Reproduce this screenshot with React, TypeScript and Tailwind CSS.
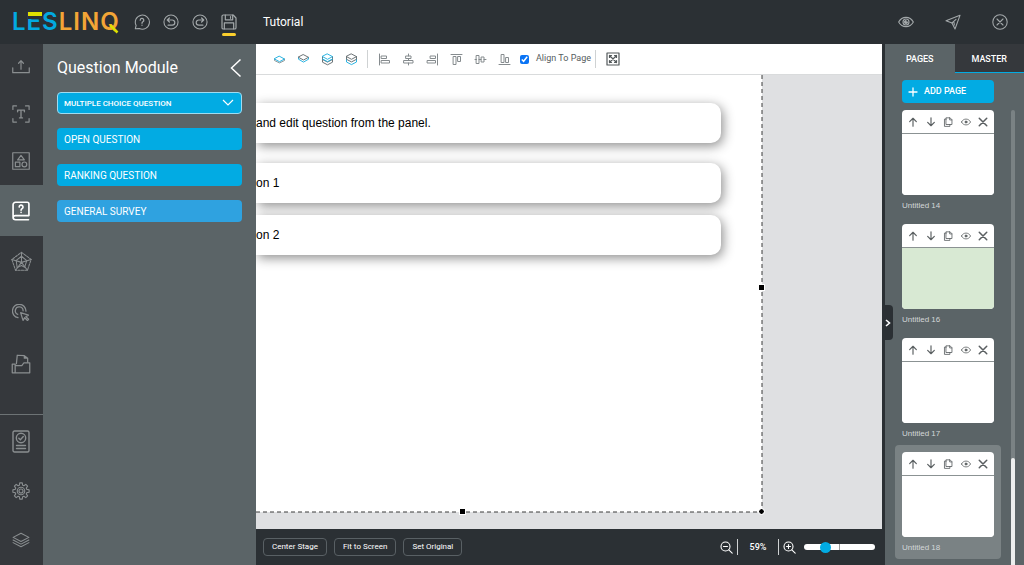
import React, { useState } from 'react';

interface PageItem {
  id: number;
  name: string;
  green?: boolean;
}

interface IconProps {
  size?: number;
  box?: number;
  sw?: number;
  className?: string;
  children: React.ReactNode;
}

// =========================
// ICONS
// =========================
function Svg({ size = 16, box = 24, sw = 1.6, className, children }: IconProps) {
  return (
    <svg
      width={size}
      height={size}
      viewBox={`0 0 ${box} ${box}`}
      fill="none"
      stroke="currentColor"
      strokeWidth={sw}
      strokeLinecap="round"
      strokeLinejoin="round"
      className={className}
      aria-hidden="true"
    >
      {children}
    </svg>
  );
}

const HelpIcon = () => (
  <Svg size={16}>
    <path d="M2 22l1.2-4.8A10.6 10.6 0 1 1 8 21.8z" />
    <path d="M9.3 9.3a2.7 2.7 0 1 1 4 2.4c-.9.5-1.3 1-1.3 2.2M12 16.6v.3" strokeWidth="1.9" />
  </Svg>
);

const UndoIcon = () => (
  <Svg size={16}>
    <circle cx="12" cy="12" r="10.6" />
    <path d="M9.6 6L6.4 9l3.2 3M6.6 9h7.2a3.9 3.9 0 0 1 0 7.8H7.6" strokeWidth="1.8" />
  </Svg>
);

const RedoIcon = () => (
  <Svg size={16}>
    <circle cx="12" cy="12" r="10.6" />
    <path d="M14.4 6l3.2 3-3.2 3M17.4 9h-7.2a3.9 3.9 0 0 0 0 7.8h6.2" strokeWidth="1.8" />
  </Svg>
);

const SaveIcon = () => (
  <Svg size={16} sw={1.8}>
    <path d="M3.5 1.5h14.8L22.5 6v14.5a2 2 0 0 1-2 2h-17a2 2 0 0 1-2-2v-17a2 2 0 0 1 2-2z" />
    <path d="M6.5 1.8v7h11v-7M14.3 4v2.5M5 22.2v-9h14v9" />
  </Svg>
);

const EyeIcon = () => (
  <Svg size={16} sw={1.7}>
    <path d="M1 12c2.4-4.4 6.4-7 11-7s8.6 2.6 11 7c-2.4 4.4-6.4 7-11 7s-8.6-2.6-11-7z" />
    <circle cx="12" cy="12" r="4.5" />
    <path d="M12 9.8a2.2 2.2 0 1 0 2.2 2.2H12z" fill="currentColor" />
  </Svg>
);

const SendIcon = () => (
  <Svg size={16}>
    <path d="M22.5 2L1.5 10.2l9 3.3L15 22.5z" />
    <path d="M10.5 13.5L16.5 8M13.5 12.5l.5 4" />
  </Svg>
);

const CloseIcon = () => (
  <Svg size={16}>
    <circle cx="12" cy="12" r="10.8" />
    <path d="M7.5 7.5l9 9M16.5 7.5l-9 9" />
  </Svg>
);

const UploadIcon = () => (
  <Svg size={18}>
    <path d="M1 13v6.5h22V13M12 15V4M8.8 7L12 3.6 15.2 7" />
  </Svg>
);

const TextIcon = () => (
  <Svg size={18}>
    <path d="M1.2 6V1.2H6M18 1.2h4.8V6M22.8 18v4.8H18M6 22.8H1.2V18" />
    <path d="M7.5 9V6.8h9V9M12 6.8v10.4M10 17.2h4" strokeWidth="1.8" />
  </Svg>
);

const ShapesIcon = () => (
  <Svg size={18}>
    <path d="M1 1h22v22H1zM12 4.5l4.5 6h-9zM4.5 13.5h6v6h-6z" />
    <circle cx="16.5" cy="16.5" r="3.2" />
  </Svg>
);

const QuestionBookIcon = () => (
  <Svg size={20} sw={2}>
    <path d="M21.5 17.5V3.5a2 2 0 0 0-2-2H5.5a3 3 0 0 0-3 3v15a3 3 0 0 0 3 3h15.5M2.5 20a2.7 2.7 0 0 1 2.9-2.5h16.1" />
    <path d="M9.8 7.2a2.3 2.3 0 1 1 3.4 2c-.8.5-1.1.9-1.1 1.9M12.1 13.7v.1" />
  </Svg>
);

const RadarIcon = () => (
  <Svg size={21} sw={1.2}>
    <path d="M12 1.5L23 9.7 18.8 22H5.2L1 9.7z" strokeDasharray="2.5 1.4" />
    <path d="M12 6l6 5-2.4 7.5-3.6-2-5 2.5L6 10.8z" />
    <path d="M12 1.5V13M23 9.7L12 13M18.8 22L12 13M5.2 22L12 13M1 9.7L12 13" />
  </Svg>
);

const ClickIcon = () => (
  <Svg size={18} sw={1.7}>
    <path d="M8 18.2A9 9 0 1 1 18.6 9.5" />
    <path d="M7.7 13.8A5.2 5.2 0 1 1 14.8 9" />
    <path d="M11.5 11.5l3.2 10.3 2.3-3.5 3.6 3.6 1.5-1.5-3.6-3.6 3.4-2z" />
  </Svg>
);

const FolderIcon = () => (
  <Svg size={20} sw={1.5}>
    <path d="M6.5 11.5L7.5 1.5 16 2l4 3v5M16 2v3h4" />
    <path d="M1.5 22.5V12H5v10.5zM5 22.5h17.5V10.5h-7L13 14H5" />
  </Svg>
);

const ReportIcon = () => (
  <svg width="18" height="23" viewBox="0 0 18 23" fill="none" stroke="currentColor" strokeWidth="1.4" strokeLinecap="round" aria-hidden="true">
    <rect x="1" y="1" width="16" height="21" rx="1.5" />
    <circle cx="9" cy="8" r="4.7" />
    <path d="M6.8 8.2l1.6 1.5 2.9-3.2M4.5 15.5h9M4.5 18.5h9" />
  </svg>
);

const GearIcon = () => (
  <Svg size={18} sw={1.5}>
    <path d="M9.8 4.3L10.3 1.2h3.4l.5 3.1 1.7.7 2.5-1.8 2.4 2.4L19 8.1l.7 1.7 3.1.5v3.4l-3.1.5-.7 1.7 1.8 2.5-2.4 2.4-2.5-1.8-1.7.7-.5 3.1h-3.4l-.5-3.1-1.7-.7-2.5 1.8-2.4-2.4L5 15.9l-.7-1.7-3.1-.5v-3.4l3.1-.5L5 8.1 3.2 5.6l2.4-2.4L8.1 5z" />
    <circle cx="12" cy="12" r="5" />
    <circle cx="12" cy="12" r="2.7" />
  </Svg>
);

const LayersIcon = () => (
  <Svg size={18} sw={1.5}>
    <path d="M12 3l10.5 5.5L12 14 1.5 8.5zM1.5 12L12 17.5 22.5 12M1.5 15.5L12 21l10.5-5.5" />
  </Svg>
);

// stack order icons, blue marks the moved layer
const OrderIcon = ({ kind }: { kind: number }) => (
  <svg width="13" height="13" viewBox="0 0 13 13" fill="none" strokeWidth="1" strokeLinejoin="round" strokeLinecap="round" aria-hidden="true">
    {kind === 0 && (
      <>
        <path d="M1.500 6v1.500l5 2.400 5-2.400V6" stroke="#8b9699" />
        <path d="M6.500 3.300l5 2.700-5 2.700-5-2.700z" stroke="#2cb4e2" />
      </>
    )}
    {kind === 1 && (
      <>
        <path d="M1.500 4.500v1.700l5 2.900 5-2.900V4.500" stroke="#2cb4e2" />
        <path d="M6.500 1.700l5 2.600-5 2.700-5-2.700z" stroke="#6d7477" />
      </>
    )}
    {kind === 2 && (
      <>
        <path d="M1.500 3.600v5.600l5 2.600 5-2.600V3.600M1.500 6.500l5 2.600 5-2.600" stroke="#6d7477" />
        <path d="M6.500 1l5 2.600-5 2.700-5-2.700zM1.500 6l5 2.600 5-2.600" stroke="#2cb4e2" />
      </>
    )}
    {kind === 3 && (
      <>
        <path d="M1.500 3.600v5.400l5 2.600 5-2.600V3.600" stroke="#2cb4e2" />
        <path d="M6.500 1l5 2.600-5 2.700-5-2.700zM1.500 3.600v2.700l5 2.600 5-2.600V3.600" stroke="#6d7477" />
      </>
    )}
  </svg>
);

const alignPaths = [
  'M1.5 1v11M3.5 3h5v2.5h-5zM3.5 7.5h8V10h-8z',
  'M6.5 1v2M6.5 5.5v2M6.5 10v2M4 3h5v2.5H4zM2 7.5h9V10H2z',
  'M11.5 1v11M4.5 3h5v2.5h-5zM1.5 7.5h8V10h-8z',
  'M1 1.5h11M3.5 3.5H6v8H3.5zM8 3.5h2.5v5H8z',
  'M1 6.5h1.5M5 6.5h2M10 6.5h2M2.5 2.5H5v8H2.5zM7.5 4H10v5H7.5z',
  'M1 11.5h11M3.5 1.5H6v8H3.5zM8 4.5h2.5v5H8z',
];
const alignNames = ['left', 'center', 'right', 'top', 'middle', 'bottom'];

const ZoomIcon = ({ plus }: { plus?: boolean }) => (
  <Svg size={13} box={13} sw={1.1}>
    <circle cx="5.5" cy="5.5" r="4.5" />
    <path d="M8.8 8.8l3.4 3.4M3.5 5.5h4" />
    {plus && <path d="M5.5 3.5v4" />}
  </Svg>
);

// =========================
// DATA
// =========================
const tools = [
  { label: 'Upload', icon: <UploadIcon /> },
  { label: 'Text', icon: <TextIcon /> },
  { label: 'Shapes', icon: <ShapesIcon /> },
];

const modules = [
  { label: 'Radar', icon: <RadarIcon /> },
  { label: 'Interaction', icon: <ClickIcon /> },
  { label: 'Files', icon: <FolderIcon /> },
];

const bottomTools = [
  { label: 'Report', icon: <ReportIcon /> },
  { label: 'Settings', icon: <GearIcon /> },
  { label: 'Layers', icon: <LayersIcon /> },
];

const pages: PageItem[] = [
  { id: 14, name: 'Untitled 14' },
  { id: 16, name: 'Untitled 16', green: true },
  { id: 17, name: 'Untitled 17' },
  { id: 18, name: 'Untitled 18' },
];

const railButton = 'flex w-full items-center justify-center pr-px';
const answerCard = 'flex h-10 items-center rounded-r-[10px] bg-white shadow-[2px_3px_12px_rgba(0,0,0,0.45)]';
const stageButton = 'h-[18px] rounded border border-[#596064] px-2 text-[8px] leading-none text-white';

function PageCard({ page, active, onSelect }: { page: PageItem; active: boolean; onSelect: () => void }) {
  return (
    <li className={`rounded p-[7px] pb-0 ${active ? 'bg-[#7a8284]' : ''}`} onClick={onSelect}>
      <div className="flex h-[85px] flex-col overflow-hidden rounded bg-white">
        <div className="flex h-6 shrink-0 items-center justify-between border-b border-[#8b9293] px-[6px] text-[#5a5f61]">
          <button aria-label="Move up">
            <Svg size={10} sw={2.8}><path d="M12 22V3M4 11l8-8 8 8" /></Svg>
          </button>
          <button aria-label="Move down">
            <Svg size={10} sw={2.8}><path d="M12 2v19M4 13l8 8 8-8" /></Svg>
          </button>
          <button aria-label="Duplicate">
            <Svg size={10} sw={2}>
              <path d="M8 2h9L21.5 6.5V18H8zM16 2v5h5M8 5H3.5v17.5h13V18" />
            </Svg>
          </button>
          <button aria-label="Preview">
            <Svg size={10} sw={1.9}>
              <path d="M1 12c2.4-4.4 6.4-7 11-7s8.6 2.6 11 7c-2.4 4.4-6.4 7-11 7s-8.6-2.600-11-7z" />
              <circle cx="12" cy="12" r="2.5" fill="currentColor" />
            </Svg>
          </button>
          <button aria-label="Delete">
            <Svg size={10} sw={3.6}><path d="M3 3l18 18M21 3L3 21" /></Svg>
          </button>
        </div>
        <div className={`flex-1 ${page.green ? 'bg-[#d8e9d3]' : 'bg-white'}`} />
      </div>
      <p className="h-[22px] font-['Liberation_Sans',sans-serif] text-[8px] leading-[21px] text-[#d3d7d8]">{page.name}</p>
    </li>
  );
}

export default function App() {
  const [activePage, setActivePage] = useState(18);
  const [zoom, setZoom] = useState(26);
  const [alignToPage, setAlignToPage] = useState(true);

  return (
    <div className="flex h-screen flex-col overflow-hidden bg-[#2b3034] font-['Roboto',sans-serif] text-white">

      {/* HEADER */}
      <header className="flex h-11 shrink-0 items-center pb-px pl-3 pr-4 text-[#a3a8aa]">
        <a href="#" className="flex w-[122px] gap-px font-['Inter',sans-serif] text-[24px] font-semibold leading-6 text-[#02a9e0]">
          <span>L</span>
          <span className="relative">
            E
            <span className="absolute left-px top-[2px] h-[7px] w-[14px] border-b-[3px] border-[#2b3034] bg-[#e0e000]" />
          </span>
          <span>S</span>
          <span className="text-[#f3a536]">L</span>
          <span className="text-[#f3a536]">I</span>
          <span className="text-[#f3a536]">N</span>
          <span className="relative text-[#f3a536]">
            Q
            <svg className="absolute bottom-0 right-0" width="10" height="10" viewBox="0 0 10 10" aria-hidden="true">
              <path d="M1 1l7.500 7.500" stroke="#dce000" strokeWidth="2.500" />
            </svg>
          </span>
        </a>
        <div className="flex items-center gap-[13px]">
          <button aria-label="Help"><HelpIcon /></button>
          <button aria-label="Undo"><UndoIcon /></button>
          <button aria-label="Redo"><RedoIcon /></button>
          <button aria-label="Save" className="relative">
            <SaveIcon />
            <span className="absolute -bottom-[6px] left-px h-[3px] w-[14px] rounded-sm bg-[#fbcf2d]" />
          </button>
        </div>
        <h1 className="ml-[26px] text-[12px] text-white">Tutorial</h1>
        <div className="ml-auto flex items-center gap-[31px]">
          <button aria-label="Preview"><EyeIcon /></button>
          <button aria-label="Publish"><SendIcon /></button>
          <button aria-label="Close"><CloseIcon /></button>
        </div>
      </header>

      <div className="flex min-h-0 flex-1">

        {/* TOOL RAIL */}
        <nav className="flex w-[43px] shrink-0 flex-col justify-between bg-[#35383c] text-[#8a8e90]">
          <div>
            {tools.map(t => (
              <button key={t.label} aria-label={t.label} className={`${railButton} h-[47px] pb-[2px]`}>
                {t.icon}
              </button>
            ))}
            <button aria-label="Questions" className={`${railButton} h-[51px] bg-[#5b6467] text-white`}>
              <QuestionBookIcon />
            </button>
            {modules.map(t => (
              <button key={t.label} aria-label={t.label} className={`${railButton} h-[51px]`}>
                {t.icon}
              </button>
            ))}
          </div>
          <div className="border-t border-[#6d7375] pb-px pt-[2px]">
            {bottomTools.map(t => (
              <button key={t.label} aria-label={t.label} className={`${railButton} h-[49px]`}>
                {t.icon}
              </button>
            ))}
          </div>
        </nav>

        {/* QUESTION PANEL */}
        <aside className="w-[213px] shrink-0 bg-[#5b6467] px-[14px]">
          <div className="flex h-12 items-center justify-between">
            <h2 className="text-base">Question Module</h2>
            <button aria-label="Close panel">
              <svg width="12" height="20" viewBox="0 0 12 20" fill="none" stroke="white" strokeWidth="1.5" aria-hidden="true">
                <path d="M10.500 1.500L1.500 10l9 8.500" />
              </svg>
            </button>
          </div>
          <div className="flex flex-col gap-[14px] text-[10px]">
            <div className="relative">
              <select
                aria-label="Question type"
                className="block h-[22px] w-full appearance-none rounded-sm border border-[#9fdcf1] bg-[#02abe3] px-[6px] pt-px text-[8px] font-medium text-white"
              >
                <option>MULTIPLE CHOICE QUESTION</option>
              </select>
              <svg className="pointer-events-none absolute right-2 top-[7px]" width="12" height="8" viewBox="0 0 12 8" fill="none" stroke="white" strokeWidth="1.2" aria-hidden="true">
                <path d="M1 1l5 5 5-5" />
              </svg>
            </div>
            <button className="h-[22px] rounded-sm bg-[#02abe3] px-[7px] text-left">OPEN QUESTION</button>
            <button className="h-[22px] rounded-sm bg-[#02abe3] px-[7px] text-left">RANKING QUESTION</button>
            <button className="h-[22px] rounded-sm bg-[#2fa2e0] px-[7px] text-left">GENERAL SURVEY</button>
          </div>
        </aside>

        {/* STAGE */}
        <main className="flex min-w-0 flex-1 flex-col">
          <div className="flex h-[31px] shrink-0 items-center border-b border-[#d9dbdc] bg-white pl-[11px] text-[#858b8e]">
            {[0, 1, 2, 3].map(k => (
              <button key={k} aria-label={`Order ${k + 1}`} className="flex w-6 justify-center">
                <OrderIcon kind={k} />
              </button>
            ))}
            <span className="mx-1 h-[18px] w-px bg-[#cfd2d3]" />
            {alignPaths.map((d, i) => (
              <button key={d} aria-label={`Align ${alignNames[i]}`} className="flex w-6 justify-center">
                <Svg size={13} box={13} sw={1}><path d={d} /></Svg>
              </button>
            ))}
            <label className="ml-1 flex items-center gap-[7px] text-[9px] text-[#565d60]">
              <input
                type="checkbox"
                className="size-[9px] accent-[#0b74f5]"
                checked={alignToPage}
                onChange={(e) => setAlignToPage(e.target.checked)}
              />
              Align To Page
            </label>
            <span className="ml-1 mr-[10px] h-[18px] w-px bg-[#cfd2d3]" />
            <button aria-label="Full screen">
              <Svg size={14} box={14} sw={1.2} className="text-[#53595b]">
                <path d="M1 1h12v12H1zM3.5 5.5v-2h2M8.5 3.5h2v2M10.5 8.5v2h-2M5.5 10.5h-2v-2M3.5 3.5l7 7M10.5 3.5l-7 7" />
              </Svg>
            </button>
          </div>

          <div className="flex min-h-0 flex-1 overflow-hidden bg-[#dfe0e2]">
            <div className="relative mb-[17px] mr-[120px] flex-1 bg-white">
              <div className="h-full overflow-hidden pr-[41px] pt-7 font-['Liberation_Sans',sans-serif] text-[12px] text-black">
                <div className={answerCard}>and edit question from the panel.</div>
                <div className={`${answerCard} mt-5`}>on 1</div>
                <div className={`${answerCard} mt-3`}>on 2</div>
              </div>
              {/* selection outline */}
              <svg className="absolute inset-0 size-full overflow-visible" stroke="#3a3a3a" strokeDasharray="4 3" aria-hidden="true">
                <line x1="100%" y1="0" x2="100%" y2="100%" />
                <line x1="0" y1="100%" x2="100%" y2="100%" />
              </svg>
              <span className="absolute -right-[2px] top-[210px] size-[5px] bg-black outline outline-white" />
              <span className="absolute -bottom-[2px] left-[204px] size-[5px] bg-black outline outline-white" />
              <span className="absolute -bottom-[2px] -right-[2px] size-[5px] rounded-full bg-black outline outline-white" />
            </div>
          </div>

          {/* ZOOM BAR */}
          <div className="flex h-9 shrink-0 items-center gap-[7px] px-[7px]">
            <button className={stageButton}>Center Stage</button>
            <button className={stageButton}>Fit to Screen</button>
            <button className={stageButton}>Set Original</button>
            <div className="ml-auto flex items-center">
              <button aria-label="Zoom out"><ZoomIcon /></button>
              <span className="mx-1 h-4 w-px bg-[#cfd2d3]" />
              <span className="w-8 pt-px text-center text-[9px] font-medium">59%</span>
              <span className="mx-1 h-4 w-px bg-[#cfd2d3]" />
              <button aria-label="Zoom in"><ZoomIcon plus /></button>
              <input
                type="range"
                aria-label="Zoom"
                value={zoom}
                onChange={(e) => setZoom(Number(e.target.value))}
                className="ml-2 h-[6px] w-[71px] appearance-none rounded-full bg-[linear-gradient(to_right,white_49%,#9a9a9a_49%,#9a9a9a_51%,white_51%)] [&::-webkit-slider-thumb]:size-[11px] [&::-webkit-slider-thumb]:appearance-none [&::-webkit-slider-thumb]:rounded-full [&::-webkit-slider-thumb]:bg-[#02abe3]"
              />
            </div>
          </div>
        </main>

        {/* PAGES PANEL */}
        <aside className="relative flex w-[142px] shrink-0 flex-col border-l-[3px] border-[#2b3034] bg-[#5b6467]">
          <button aria-label="Collapse pages" className="absolute -left-[2px] top-[261px] flex h-[35px] w-[10px] items-center justify-center rounded-r bg-[#2b3034]">
            <svg width="6" height="8" viewBox="0 0 6 8" fill="none" stroke="white" strokeWidth="1.6" aria-hidden="true">
              <path d="M1 1l3.500 3L1 7" />
            </svg>
          </button>
          <div className="flex h-[29px] shrink-0 text-[9px] font-medium">
            <button className="flex-1 border-b border-transparent pt-[3px]">PAGES</button>
            <button className="flex-1 border-b border-[#02abe3] bg-[#35383c] pt-[3px]">MASTER</button>
          </div>
          <div className="flex min-h-0 flex-1 justify-between overflow-hidden pl-[10px] pr-[9px]">
            <div className="w-[106px] pt-[7px]">
              <button className="mx-[7px] flex h-[23px] w-[92px] items-center gap-[6px] rounded-sm bg-[#02abe3] px-[6px] text-[9px] font-medium">
                <Svg size={10} box={10} sw={1.3}><path d="M5 1v8M1 5h8" /></Svg>
                ADD PAGE
              </button>
              <ul>
                {pages.map(p => (
                  <PageCard key={p.id} page={p} active={p.id === activePage} onSelect={() => setActivePage(p.id)} />
                ))}
              </ul>
            </div>
            <div className="mt-[37px] flex w-1 flex-col justify-end rounded-t-full bg-[#7a8284]">
              <div className="h-[107px] rounded-t-full bg-[#eceeee]" />
            </div>
          </div>
        </aside>
      </div>
    </div>
  );
}
